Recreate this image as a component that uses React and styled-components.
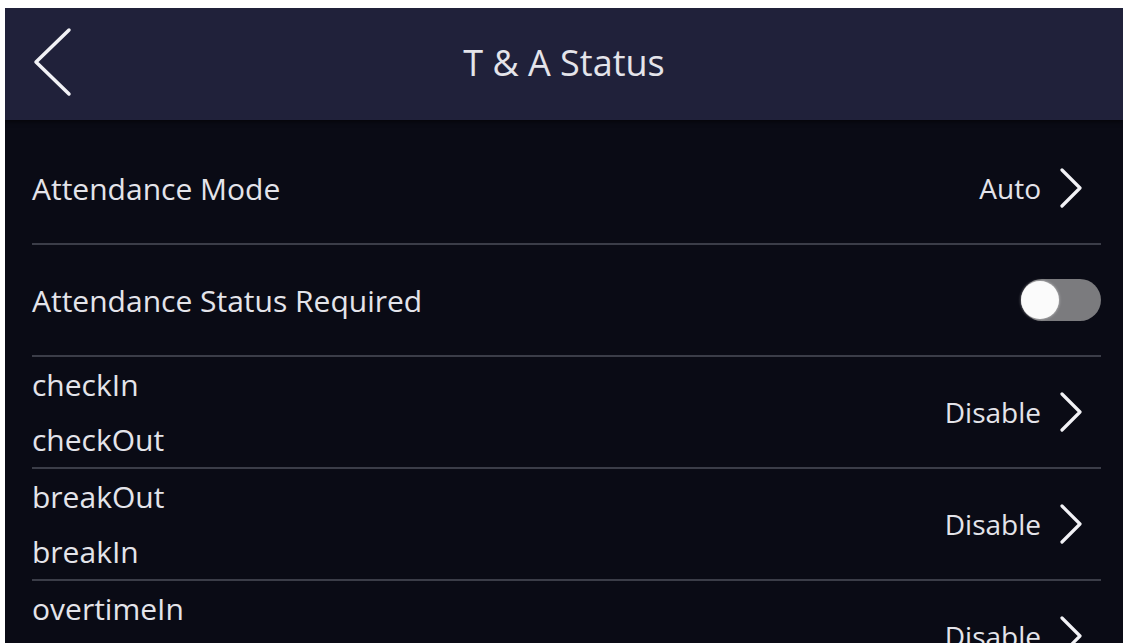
import React from 'react'
import styled, { createGlobalStyle } from 'styled-components'

const colors = {
  header: '#20213a',
  body: '#0a0b15',
  text: '#e4e4ea',
  divider: '#3b3d48',
  track: '#7b7b7e',
}

const GlobalStyle = createGlobalStyle`
  html, body {
    margin: 0;
    padding: 0;
    background: #ffffff;
  }
  body {
    font-family: "Open Sans", "Noto Sans", sans-serif;
    overflow: hidden;
  }
`

const Screen = styled.div`
  margin: 8px 3px 0 5px;
  height: calc(100vh - 8px);
  background: ${colors.body};
  display: flex;
  flex-direction: column;
  overflow: hidden;
`

const Header = styled.header`
  flex: none;
  height: 112px;
  background: ${colors.header};
  display: grid;
  grid-template-columns: 120px 1fr 120px;
  align-items: center;
  box-shadow: 0 2px 4px rgba(0, 0, 0, 0.5);
`

const BackButton = styled.button`
  background: none;
  border: none;
  padding: 0 0 4px 26px;
  display: flex;
  align-items: center;
  cursor: pointer;
`

const Title = styled.h1`
  margin: 0 0 4px;
  text-align: center;
  font-size: 36px;
  font-weight: 500;
  color: ${colors.text};
`

const List = styled.ul`
  list-style: none;
  margin: 0;
  padding: 13px 22px 0 27px;
`

const Row = styled.li`
  display: flex;
  align-items: center;
  justify-content: space-between;
  height: 110px;
  border-bottom: 2px solid ${colors.divider};
`

const Labels = styled.div`
  display: flex;
  flex-direction: column;
  gap: ${p => (p.$stacked ? '20px' : '0')};
`

const Label = styled.span`
  font-size: 30px;
  font-weight: 500;
  line-height: 35px;
  color: ${colors.text};
`

const Value = styled.div`
  display: flex;
  align-items: center;
  gap: 18px;
  margin-right: 18px;
  font-size: 28px;
  font-weight: 500;
  color: ${colors.text};
`

const Toggle = styled.div`
  width: 80px;
  height: 42px;
  border-radius: 21px;
  background: ${colors.track};
  display: flex;
  align-items: center;
  justify-content: ${p => (p.$on ? 'flex-end' : 'flex-start')};
`

const Knob = styled.span`
  width: 38px;
  height: 38px;
  border-radius: 50%;
  background: #fbfbfb;
  box-shadow: 0 0 3px rgba(255, 255, 255, 0.6);
`

const BackArrow = () => (
  <svg width="44" height="72" viewBox="0 0 44 72">
    <polyline points="38,4 5,36 38,68" fill="none" stroke="#f2f2f6"
              strokeWidth="3.5" strokeLinecap="round" strokeLinejoin="round" />
  </svg>
)

const Chevron = () => (
  <svg width="24" height="40" viewBox="0 0 24 40">
    <polyline points="3,2 21,20 3,38" fill="none" stroke="#f2f2f6"
              strokeWidth="3.2" strokeLinecap="round" strokeLinejoin="round" />
  </svg>
)

const rows = [
  { labels: ['Attendance Mode'], value: 'Auto' },
  { labels: ['Attendance Status Required'], toggle: false },
  { labels: ['checkIn', 'checkOut'], value: 'Disable' },
  { labels: ['breakOut', 'breakIn'], value: 'Disable' },
  { labels: ['overtimeIn', 'overtimeOut'], value: 'Disable' },
]

export default function App() {
  return (
    <>
      <GlobalStyle />
      <Screen>
        <Header>
          <BackButton aria-label="Back">
            <BackArrow />
          </BackButton>
          <Title>T &amp; A Status</Title>
          <span />
        </Header>
        <List>
          {rows.map(row => (
            <Row key={row.labels[0]}>
              <Labels $stacked={row.labels.length > 1}>
                {row.labels.map(l => <Label key={l}>{l}</Label>)}
              </Labels>
              {row.toggle !== undefined
                ? <Toggle $on={row.toggle}><Knob /></Toggle>
                : <Value>{row.value}<Chevron /></Value>}
            </Row>
          ))}
        </List>
      </Screen>
    </>
  )
}
